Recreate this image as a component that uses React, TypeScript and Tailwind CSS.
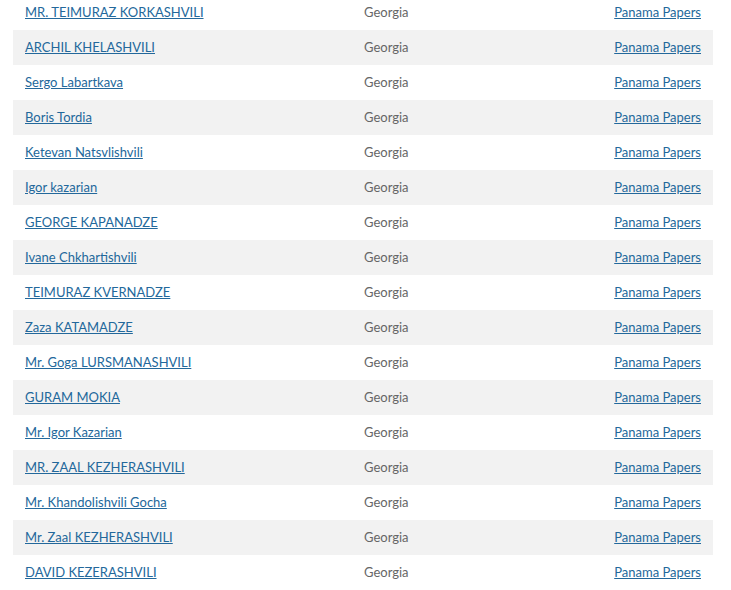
const rows = [
  "MR. TEIMURAZ KORKASHVILI",
  "ARCHIL KHELASHVILI",
  "Sergo Labartkava",
  "Boris Tordia",
  "Ketevan Natsvlishvili",
  "Igor kazarian",
  "GEORGE KAPANADZE",
  "Ivane Chkhartishvili",
  "TEIMURAZ KVERNADZE",
  "Zaza KATAMADZE",
  "Mr. Goga LURSMANASHVILI",
  "GURAM MOKIA",
  "Mr. Igor Kazarian",
  "MR. ZAAL KEZHERASHVILI",
  "Mr. Khandolishvili Gocha",
  "Mr. Zaal KEZHERASHVILI",
  "DAVID KEZERASHVILI",
];

export default function App() {
  return (
    <div className="bg-white min-h-[590px] px-[13px] font-['Lato','Noto_Sans',sans-serif] text-[13px]">
      <table className="w-[700px] -mt-[5px] border-collapse">
        <tbody>
          {rows.map((name, i) => (
            <tr key={i} className={i % 2 === 1 ? "bg-[#f2f2f2]" : "bg-white"}>
              <td className="h-[35px] w-[339px] px-3 align-middle">
                <a href="#" className="text-[#23689b] underline">{name}</a>
              </td>
              <td className="h-[35px] px-3 align-middle text-[#666]">Georgia</td>
              <td className="h-[35px] px-3 align-middle text-right">
                <a href="#" className="text-[#23689b] underline">Panama Papers</a>
              </td>
            </tr>
          ))}
        </tbody>
      </table>
    </div>
  );
}
